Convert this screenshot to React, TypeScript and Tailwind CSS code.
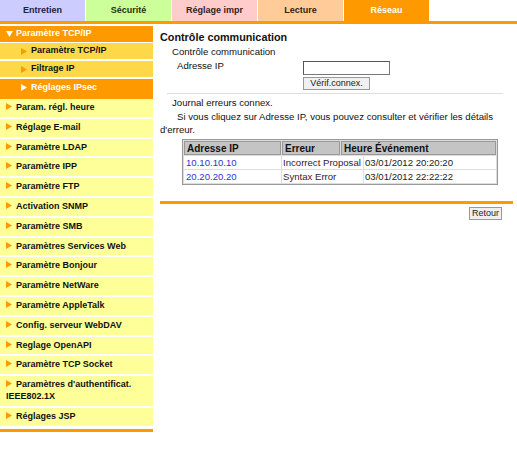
import React from 'react';

// ── Tabs ──
const tabs = [
  { label: 'Entretien', bg: 'bg-[#ccccff]', text: 'text-[#222244]' },
  { label: 'Sécurité', bg: 'bg-[#ccff99]', text: 'text-[#223311]' },
  { label: 'Réglage impr', bg: 'bg-[#ffcccc]', text: 'text-[#332222]' },
  { label: 'Lecture', bg: 'bg-[#ffcc99]', text: 'text-[#332211]' },
  { label: 'Réseau', bg: 'bg-[#ff9900]', text: 'text-white' },
];

const menu = [
  'Param. régl. heure',
  'Réglage E-mail',
  'Paramètre LDAP',
  'Paramètre IPP',
  'Paramètre FTP',
  'Activation SNMP',
  'Paramètre SMB',
  'Paramètres Services Web',
  'Paramètre Bonjour',
  'Paramètre NetWare',
  'Paramètre AppleTalk',
  'Config. serveur WebDAV',
  'Reglage OpenAPI',
  'Paramètre TCP Socket',
  "Paramètres d'authentificat. IEEE802.1X",
  'Réglages JSP',
];

const rows = [
  { ip: '10.10.10.10', err: 'Incorrect Proposal', time: '03/01/2012 20:20:20' },
  { ip: '20.20.20.20', err: 'Syntax Error', time: '03/01/2012 22:22:22' },
];

function Arrow({ color = '#ff9900' }: { color?: string }) {
  return (
    <svg width="6" height="7" viewBox="0 0 6 7" className="inline-block mr-[4px] align-[0px]">
      <path d="M0 0 L6 3.5 L0 7 Z" fill={color} />
    </svg>
  );
}

export default function App() {
  return (
    <div className="w-[517px] h-[450px] bg-white font-['Liberation_Sans',Arial,sans-serif] overflow-hidden">
      {/* ── Onglets ── */}
      <div className="flex gap-[1px] h-[21px]">
        {tabs.map((t) => (
          <div
            key={t.label}
            className={`w-[85px] flex items-center justify-center text-[9px] font-bold ${t.bg} ${t.text}`}
          >
            {t.label}
          </div>
        ))}
      </div>
      <div className="h-[3px] bg-[#ff9900]" />

      <div className="flex pt-[2px]">
        {/* ── Menu latéral ── */}
        <aside className="w-[153px] shrink-0 text-[9px] font-bold">
          <div className="bg-[#ff9900] text-white h-[17px] flex items-center pl-[6px] border-b border-white">
            <svg width="7" height="6" viewBox="0 0 7 6" className="mr-[3px]">
              <path d="M0 0 L7 0 L3.5 6 Z" fill="#ffffff" />
            </svg>
            Paramètre TCP/IP
          </div>
          <div className="bg-[#ffd84a] text-[#111] h-[18px] flex items-center pl-[21px] border-b-2 border-white">
            <Arrow />
            Paramètre TCP/IP
          </div>
          <div className="bg-[#ffd84a] text-[#111] h-[18px] flex items-center pl-[21px] border-b-2 border-white">
            <Arrow />
            Filtrage IP
          </div>
          <div className="bg-[#ff9900] text-white h-[17px] flex items-center pl-[21px]">
            <Arrow color="#ffffff" />
            Réglages IPsec
          </div>
          <div className="h-[3px] bg-[#ff9900]" />

          {menu.map((m) => (
            <div
              key={m}
              className="bg-[#ffff99] text-[#111] pl-[6px] pr-[2px] py-[3px] leading-[11.8px] border-b-2 border-white"
            >
              <Arrow />
              {m}
            </div>
          ))}
          <div className="h-[3px] bg-[#ff9900] mt-[1px]" />
        </aside>

        {/* ── Contenu ── */}
        <main className="flex-1 pl-[7px] pr-[4px] pt-[5px] text-[9.6px] text-[#111]">
          <h1 className="text-[10.8px] font-bold leading-[13px]">Contrôle communication</h1>
          <div className="pl-[12px] mt-[2px] leading-[12px]">Contrôle communication</div>
          <div className="flex items-start mt-[1px]">
            <div className="w-[143px] pl-[17px] pt-[1px] leading-[12px]">Adresse IP</div>
            <div className="flex flex-col gap-[2px] pt-[2px]">
              <input
                className="w-[87px] h-[14px] border border-[#777] border-t-[#555] border-l-[#555] bg-white outline-none"
                readOnly
              />
              <button className="w-[67px] h-[13px] text-[9px] leading-[11px] border border-[#999] bg-[#f0f0f0] text-[#222]">
                Vérif.connex.
              </button>
            </div>
          </div>
          <div className="ml-[7px] mr-[10px] mt-[3px] h-[1px] bg-[#999] border-b border-[#ddd]" />

          <div className="pl-[12px] mt-[3px] leading-[12px]">Journal erreurs connex.</div>
          <p className="leading-[13px] mt-[1px]">
            <span className="pl-[17px]">Si vous cliquez sur Adresse IP, vous pouvez consulter et vérifier les détails</span>
            <br />
            d'erreur.
          </p>

          {/* Journal : l'en-tête et les lignes n'ont pas les mêmes largeurs de colonne */}
          <div className="ml-[22px] mt-[3px] w-[316px] border border-[#999] bg-[#ddd] p-[1px] flex flex-col gap-[1px]">
            <div className="flex gap-[1px] text-[10px] font-bold text-[#111]">
              <div className="w-[97px] h-[14px] leading-[13px] px-[2px] bg-[#c4c4c4] border border-[#999]">Adresse IP</div>
              <div className="w-[58px] h-[14px] leading-[13px] px-[2px] bg-[#c4c4c4] border border-[#999]">Erreur</div>
              <div className="flex-1 h-[14px] leading-[13px] px-[2px] bg-[#c4c4c4] border border-[#999]">Heure Événement</div>
            </div>
            {rows.map((r) => (
              <div key={r.ip} className="flex gap-[1px]">
                <div className="w-[97px] h-[13px] leading-[13px] px-[2px] bg-white text-[#3333cc]">{r.ip}</div>
                <div className="w-[81px] h-[13px] leading-[13px] px-[1px] bg-white text-[#332233] whitespace-nowrap">{r.err}</div>
                <div className="flex-1 h-[13px] leading-[13px] px-[1px] bg-white text-[#222]">{r.time}</div>
              </div>
            ))}
          </div>

          <div className="mt-[16px] h-[3px] bg-[#ff9900]" />
          <div className="flex justify-end pr-[11px] mt-[3px]">
            <button className="w-[33px] h-[13px] text-[9px] leading-[11px] border border-[#999] bg-[#f0f0f0] text-[#222]">
              Retour
            </button>
          </div>
        </main>
      </div>
    </div>
  );
}
